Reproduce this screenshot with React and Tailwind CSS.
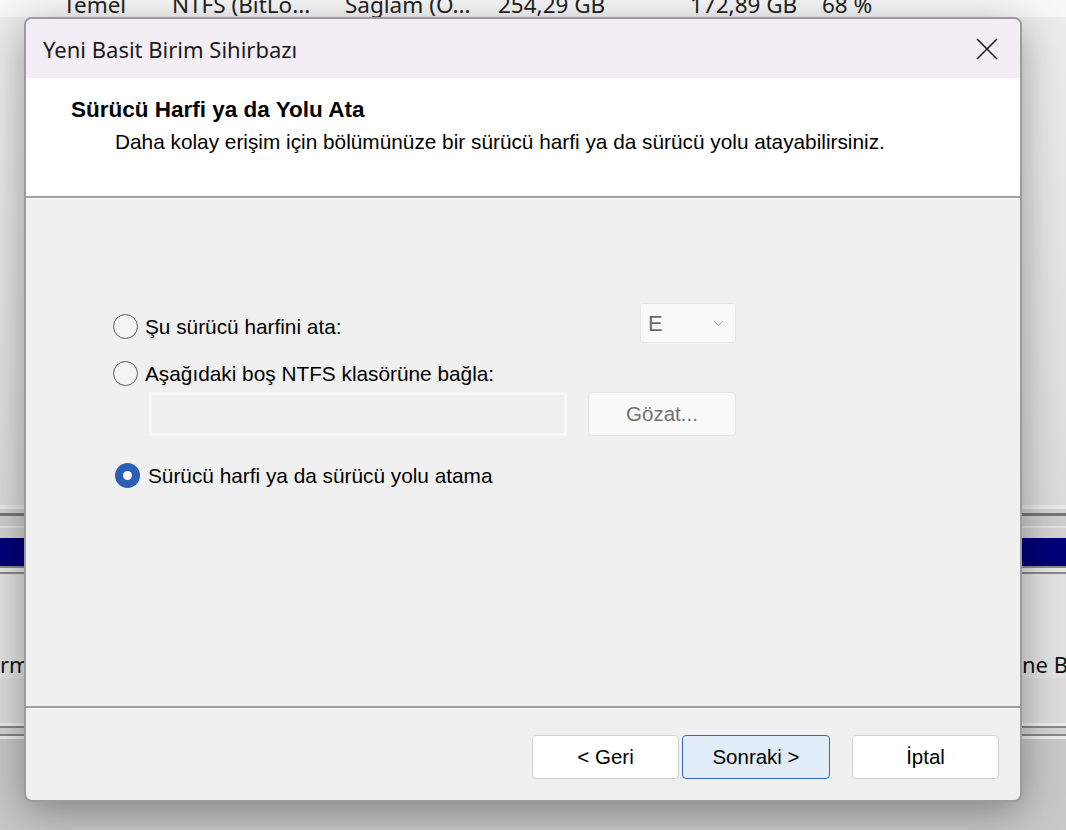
import { ChevronDown } from 'lucide-react';

function Radio({ checked }) {
  if (checked) {
    return (
      <span className="flex items-center justify-center w-[25px] h-[25px] rounded-full bg-[#2b5fb4] shrink-0">
        <span className="w-[9px] h-[9px] rounded-full bg-white" />
      </span>
    );
  }
  return <span className="w-[25px] h-[25px] rounded-full border-[1.5px] border-[#5c5c5c] bg-[#f3f3f3] shrink-0" />;
}

function Btn({ children, primary }) {
  return (
    <button
      className={
        primary
          ? 'w-[148px] h-[44px] rounded-[4px] border border-[#2f6cc2] bg-[#e1ecf8] text-[20.5px] text-black'
          : 'w-[147px] h-[44px] rounded-[4px] border border-[#d2d2d2] bg-white text-[20.5px] text-black'
      }
    >
      {children}
    </button>
  );
}

export default function App() {
  return (
    <div className="relative w-[1066px] h-[830px] overflow-hidden bg-[#e6e6e6] font-['Noto_Sans',sans-serif]">
      {/* background window (Disk Management) */}
      <div className="flex flex-col h-full">
        <div className="h-[17px] shrink-0 bg-[#f7f7f7] overflow-hidden">
          <div className="flex -mt-[12px] pl-[63px] text-[22.5px] text-[#222] whitespace-nowrap">
            <span className="w-[109px]">Temel</span>
            <span className="w-[173px]">NTFS (BitLo...</span>
            <span className="w-[153px]">Sağlam (O...</span>
            <span className="w-[192px]">254,29 GB</span>
            <span className="w-[132px]">172,89 GB</span>
            <span>68 %</span>
          </div>
        </div>
        <div className="h-[488px] shrink-0 bg-gradient-to-b from-[#ececec] to-[#dcdcdc]" />
        <div className="h-[4px] bg-[#e8e8e8]" />
        <div className="h-[4px] bg-[#d4d4d4]" />
        <div className="h-[3px] bg-[#777]" />
        <div className="h-[10px] bg-[#cfcfcf]" />
        <div className="h-[2px] bg-[#e2e2e2]" />
        <div className="h-[10px] bg-[#d2d2d2]" />
        <div className="h-[28px] bg-[#000078]" />
        <div className="h-[2px] bg-[#8c8c8c]" />
        <div className="h-[4px] bg-[#e6e6e6]" />
        <div className="h-[2px] bg-[#888]" />
        <div className="h-[76px] bg-[#e2e2e2]" />
        <div className="h-[28px] bg-[#e2e2e2] flex justify-between text-[22px] text-[#111] leading-[28px] whitespace-nowrap">
          <span>rm</span>
          <span className="pl-[3px] w-[47px] overflow-hidden">ne Bi</span>
        </div>
        <div className="h-[45px] bg-[#dcdcdc]" />
        <div className="h-[3px] bg-[#ececec]" />
        <div className="h-[2px] bg-[#888]" />
        <div className="h-[6px] bg-[#d4d4d4]" />
        <div className="h-[2px] bg-[#888]" />
        <div className="h-[3px] bg-[#ececec]" />
        <div className="flex-1 bg-[#c8c8c8]" />
      </div>

      {/* wizard dialog */}
      <div className="absolute left-[24px] top-[17px] w-[998px] h-[785px] rounded-[8px] overflow-hidden border-2 border-[#9c9c9c] bg-[#f0f0f0] shadow-[0_10px_40px_rgba(0,0,0,0.35)] flex flex-col font-['Liberation_Sans',Arial,sans-serif]">
        <div className="h-[59px] shrink-0 bg-[#f3eef5] flex items-center justify-between pl-[17px] pr-[22px]">
          <span className="text-[22px] text-[#1a1a1a] font-['Noto_Sans',sans-serif] pt-[1px]">Yeni Basit Birim Sihirbazı</span>
          <svg width="22" height="22" viewBox="0 0 22 22" className="text-[#1a1a1a]">
            <path d="M1 1 L21 21 M21 1 L1 21" stroke="currentColor" strokeWidth="1.6" fill="none" />
          </svg>
        </div>
        <div className="h-[118px] shrink-0 bg-white pl-[45px] pt-[19px]">
          <div className="text-[22.5px] font-bold text-black leading-[26px]">Sürücü Harfi ya da Yolu Ata</div>
          <div className="pl-[44px] mt-[7px] text-[20.8px] text-black leading-[24px]">
            Daha kolay erişim için bölümünüze bir sürücü harfi ya da sürücü yolu atayabilirsiniz.
          </div>
        </div>
        <div className="h-[2px] shrink-0 bg-[#a0a0a0]" />
        <div className="h-[1px] shrink-0 bg-white" />

        <div className="h-[507px] shrink-0 pl-[87px] pt-[104px] text-[20.8px] text-black">
          <div className="w-[623px]">
            <div className="flex items-start justify-between h-[40px]">
              <label className="flex items-center gap-[7px] mt-[11px]">
                <Radio />
                <span className="leading-[24px]">Şu sürücü harfini ata:</span>
              </label>
              <div className="w-[96px] h-[40px] bg-[#f9f9f9] border border-[#e6e6e6] rounded-[3px] flex items-center justify-between pl-[7px] pr-[8px]">
                <span className="text-[22px] text-[#6c6c6c]">E</span>
                <ChevronDown className="w-[17px] h-[17px] text-[#9a9a9a]" strokeWidth={1.2} />
              </div>
            </div>
            <label className="flex items-center gap-[7px] mt-[18px]">
              <Radio />
              <span className="leading-[24px]">Aşağıdaki boş NTFS klasörüne bağla:</span>
            </label>
            <div className="flex justify-between mt-[6px] pl-[36px]">
              <div className="w-[418px] h-[44px] border-[3px] border-[#f8f8f8] bg-[#efefef]" />
              <button className="w-[148px] h-[44px] rounded-[4px] border border-[#e6e6e6] bg-[#f9f9f9] text-[20.5px] text-[#707070]">
                Gözat...
              </button>
            </div>
            <label className="flex items-center gap-[8px] mt-[27px] ml-[2px]">
              <Radio checked />
              <span className="leading-[24px]">Sürücü harfi ya da sürücü yolu atama</span>
            </label>
          </div>
        </div>

        <div className="h-[2px] shrink-0 bg-[#a0a0a0]" />
        <div className="h-[1px] shrink-0 bg-white" />
        <div className="flex-1 flex items-start justify-end pt-[26px] pr-[21px]">
          <div className="flex gap-[3px]">
            <Btn>&lt; Geri</Btn>
            <Btn primary>Sonraki &gt;</Btn>
          </div>
          <div className="ml-[22px]">
            <Btn>İptal</Btn>
          </div>
        </div>
      </div>
    </div>
  );
}
